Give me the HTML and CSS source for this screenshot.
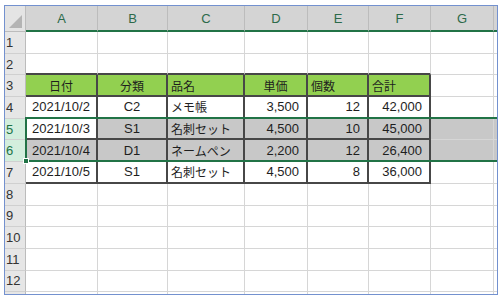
FILE: index.html
```html
<!DOCTYPE html>
<html lang="ja">
<head>
  <meta charset="UTF-8">
  <title>Sheet1</title>
  <link rel="stylesheet" href="styles.css">
</head>
<body>
  <div class="sheet">
    <div class="grid">
      <!-- column headers -->
      <div class="corner">
        <svg width="13" height="13" viewBox="0 0 13 13"><polygon points="13,0 13,13 0,13" fill="#b4b4b4"/></svg>
      </div>
      <div class="c ch">A</div>
      <div class="c ch">B</div>
      <div class="c ch">C</div>
      <div class="c ch">D</div>
      <div class="c ch">E</div>
      <div class="c ch">F</div>
      <div class="c ch">G</div>
      <div class="c ch end"></div>

      <!-- 1 -->
      <div class="c rh">1</div>
      <div class="c"></div><div class="c"></div><div class="c"></div><div class="c"></div>
      <div class="c"></div><div class="c"></div><div class="c"></div><div class="c end"></div>

      <!-- 2 -->
      <div class="c rh">2</div>
      <div class="c above"></div><div class="c above"></div><div class="c above"></div><div class="c above"></div>
      <div class="c above"></div><div class="c above"></div><div class="c"></div><div class="c end"></div>

      <!-- 3: table head -->
      <div class="c rh">3</div>
      <div class="c t th ja ctr">日付</div>
      <div class="c t th ja ctr">分類</div>
      <div class="c t th ja">品名</div>
      <div class="c t th ja ctr">単価</div>
      <div class="c t th ja">個数</div>
      <div class="c t th ja">合計</div>
      <div class="c"></div><div class="c end"></div>

      <!-- 4 -->
      <div class="c rh">4</div>
      <div class="c t ctr">2021/10/2</div>
      <div class="c t ctr">C2</div>
      <div class="c t ja">メモ帳</div>
      <div class="c t rt">3,500</div>
      <div class="c t rt">12</div>
      <div class="c t rt">42,000</div>
      <div class="c"></div><div class="c end"></div>

      <!-- 5 (selected, active cell A5) -->
      <div class="c rh on">5</div>
      <div class="c t ctr">2021/10/3</div>
      <div class="c t hl ctr">S1</div>
      <div class="c t hl ja">名刺セット</div>
      <div class="c t hl rt">4,500</div>
      <div class="c t hl rt">10</div>
      <div class="c t hl rt">45,000</div>
      <div class="c hl"></div><div class="c hl end"></div>

      <!-- 6 (selected) -->
      <div class="c rh on">6</div>
      <div class="c t hl ctr">2021/10/4</div>
      <div class="c t hl ctr">D1</div>
      <div class="c t hl ja">ネームペン</div>
      <div class="c t hl rt">2,200</div>
      <div class="c t hl rt">12</div>
      <div class="c t hl rt">26,400</div>
      <div class="c hl"></div><div class="c hl end"></div>

      <!-- 7 -->
      <div class="c rh">7</div>
      <div class="c t ctr">2021/10/5</div>
      <div class="c t ctr">S1</div>
      <div class="c t ja">名刺セット</div>
      <div class="c t rt">4,500</div>
      <div class="c t rt">8</div>
      <div class="c t rt">36,000</div>
      <div class="c"></div><div class="c end"></div>

      <!-- 8 - 12 empty -->
      <div class="c rh">8</div>
      <div class="c"></div><div class="c"></div><div class="c"></div><div class="c"></div>
      <div class="c"></div><div class="c"></div><div class="c"></div><div class="c end"></div>

      <div class="c rh">9</div>
      <div class="c"></div><div class="c"></div><div class="c"></div><div class="c"></div>
      <div class="c"></div><div class="c"></div><div class="c"></div><div class="c end"></div>

      <div class="c rh">10</div>
      <div class="c"></div><div class="c"></div><div class="c"></div><div class="c"></div>
      <div class="c"></div><div class="c"></div><div class="c"></div><div class="c end"></div>

      <div class="c rh">11</div>
      <div class="c"></div><div class="c"></div><div class="c"></div><div class="c"></div>
      <div class="c"></div><div class="c"></div><div class="c"></div><div class="c end"></div>

      <div class="c rh">12</div>
      <div class="c"></div><div class="c"></div><div class="c"></div><div class="c"></div>
      <div class="c"></div><div class="c"></div><div class="c"></div><div class="c end"></div>

      <!-- row 13 only peeks in under the frame edge -->
      <div class="c rh"></div>
      <div class="c"></div><div class="c"></div><div class="c"></div><div class="c"></div>
      <div class="c"></div><div class="c"></div><div class="c"></div><div class="c end"></div>

      <!-- selection of rows 5:6 -->
      <div class="selection"><span class="handle"></span></div>
    </div>
  </div>
</body>
</html>
```

FILE: styles.css
```css
body {
  margin: 0;
  background: #fff;
}
.sheet {
  box-sizing: border-box;
  width: 494px;
  height: 290px;
  margin: 5px 0 0 4px;
  border: 1px solid #7391cf;
  overflow: hidden;
}
.grid {
  position: relative;
  display: grid;
  grid-template-columns: 21px 72px 70px 77px 63px 61px 62px 63px 1fr;
  grid-template-rows: 26px repeat(13, 21.7px);
  font-family: "Liberation Sans", "Noto Sans CJK JP", sans-serif;
  font-size: 13px;
  color: #1e1e1e;
}
.grid > div {
  box-sizing: border-box;
}
.c {
  display: flex;
  align-items: center;
  padding: 0 3px;
  border-right: 1px solid #d6d6d6;
  border-bottom: 1px solid #d6d6d6;
  white-space: nowrap;
  overflow: hidden;
}
.end {
  border-right: 0;
}
.corner {
  display: flex;
  align-items: flex-end;
  justify-content: flex-end;
  padding: 0 3px 3px 0;
  background: #e4e4e4;
  border-right: 1px solid #bcbcbc;
  border-bottom: 1px solid #bcbcbc;
}
.ch {
  justify-content: center;
  background: #d4d4d4;
  color: #2c6a4a;
  font-size: 13px;
  border-right-color: #bcbcbc;
  border-bottom: 2px solid #217346;
}
.rh {
  padding: 0 1px;
  background: #e6e6e6;
  color: #333;
  font-size: 13px;
  border-right-color: #bcbcbc;
  border-bottom-color: #d0d0d0;
}
.rh.on {
  background: #d3eedd;
  color: #217346;
}
.ctr {
  justify-content: center;
}
.rt {
  justify-content: flex-end;
  padding-right: 7px;
}
.ja {
  font-family: "Noto Sans CJK JP", sans-serif;
  font-size: 12px;
}
.above {
  border-bottom: 2px solid #474747;
}
.t {
  border-right: 2px solid #474747;
  border-bottom: 2px solid #474747;
}
.th {
  background: #92d050;
}
.hl {
  background: #c8c8c8;
}
.selection {
  position: absolute;
  grid-row: 6 / 8;
  grid-column: 2 / -1;
  top: -2px;
  left: -1px;
  right: 0;
  bottom: 0;
  border: 2px solid #217346;
  border-right: 0;
  pointer-events: none;
}
.handle {
  position: absolute;
  left: -4px;
  bottom: -4px;
  width: 6px;
  height: 6px;
  box-sizing: border-box;
  background: #217346;
  border: 1px solid #fff;
}
```
